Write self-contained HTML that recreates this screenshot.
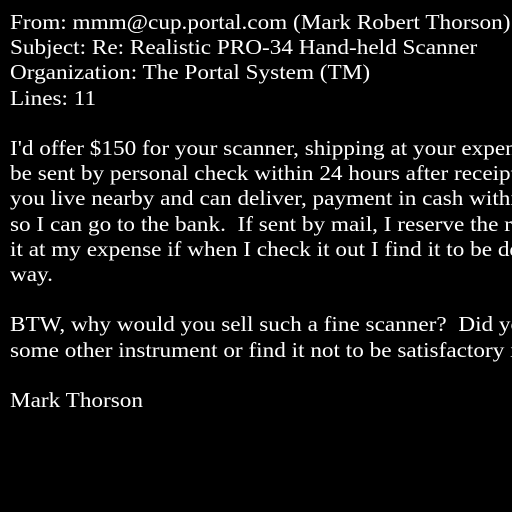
<!DOCTYPE html>
<html><head><meta charset="utf-8"><style>
html,body{margin:0;padding:0;background:#000;width:512px;height:512px;overflow:hidden}
#w{position:relative;width:512px;height:512px;overflow:hidden}
pre{margin:0;position:absolute;left:10px;top:10px;color:#fff;font-family:"Liberation Serif",serif;font-size:21px;line-height:25.2px;white-space:pre;transform:scaleX(1.105);transform-origin:0 0}
</style></head><body><div id="w"><pre>From: mmm@cup.portal.com (Mark Robert Thorson)
Subject: Re: Realistic PRO-34 Hand-held Scanner
Organization: The Portal System (TM)
Lines: 11

I'd offer $150 for your scanner, shipping at your expense.
be sent by personal check within 24 hours after receipt.
you live nearby and can deliver, payment in cash within a day
so I can go to the bank.  If sent by mail, I reserve the right
it at my expense if when I check it out I find it to be defective
way.

BTW, why would you sell such a fine scanner?  Did you buy
some other instrument or find it not to be satisfactory in

Mark Thorson</pre></div></body></html>
